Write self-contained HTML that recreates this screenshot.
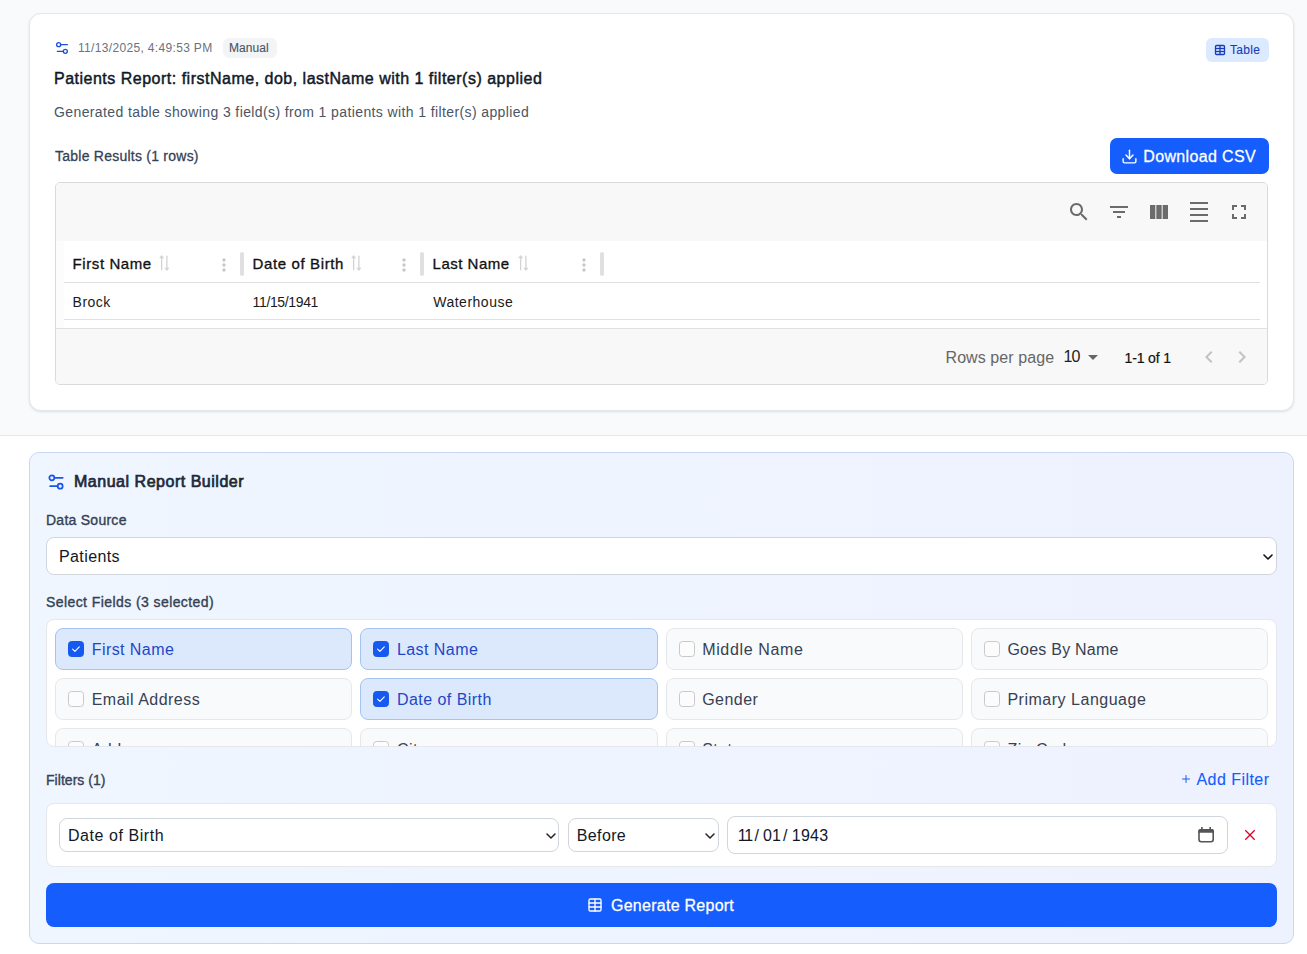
<!DOCTYPE html>
<html><head><meta charset="utf-8">
<style>
*{box-sizing:border-box;margin:0;padding:0}
html,body{width:1307px;height:954px;overflow:hidden;background:#fff;font-family:"Liberation Sans",sans-serif}
.a{position:absolute;white-space:nowrap;line-height:1}
#top{position:absolute;left:0;top:0;width:1307px;height:436px;background:#f9fafb;border-bottom:1px solid #e5e7eb}
#card{position:absolute;left:29px;top:13px;width:1265px;height:398px;background:#fff;border:1px solid #e5e7eb;border-radius:12px;box-shadow:0 1px 3px rgba(0,0,0,.08),0 1px 2px rgba(0,0,0,.04)}
.badge{position:absolute;border-radius:6px}
.btn{position:absolute;background:#155dfc;border-radius:7px}
#tbox{position:absolute;left:55px;top:182px;width:1213px;height:203px;background:#f8f8f8;border:1px solid #dadada;border-radius:5px;overflow:hidden}
.ico{position:absolute}
#builder{position:absolute;left:29px;top:452px;width:1265px;height:492px;background:linear-gradient(to right,#eff6ff,#eef2ff);border:1px solid #c8d8f2;border-radius:10px}
.sel{position:absolute;background:#fff;border:1px solid #d1d5dc;border-radius:8px}
.fld{position:absolute;height:42px;border:1px solid #e5e7eb;background:#f9fafb;border-radius:8px}
.fld.on{background:#dce9fc;border-color:#a3c4ef}
.cb{position:absolute;left:12px;top:12px;width:16px;height:16px;border:1.6px solid #c9c9c9;border-radius:3.5px;background:#fcfcfc}
.cb.on{background:#1659f0;border-color:#1659f0}
.fl{position:absolute;left:35.7px;font-size:16px;line-height:1;color:#364153}
.fld.on .fl{color:#1e47c8}
.sb{-webkit-text-stroke:0.45px currentColor}
.md{-webkit-text-stroke:0.28px currentColor}
</style></head><body>
<div id="top"></div>
<div id="card"></div>
<!-- header row -->
<svg class="ico" style="left:54px;top:40px" width="16" height="16" viewBox="0 0 24 24" fill="none" stroke="#1d4ed8" stroke-width="2" stroke-linecap="round"><path d="M20 7h-9"/><path d="M14 17H5"/><circle cx="17" cy="17" r="3"/><circle cx="7" cy="7" r="3"/></svg>
<div class="a" id="t_ts" style="letter-spacing:0.33px;left:78px;top:42.2px;font-size:12px;color:#6a7282">11/13/2025, 4:49:53 PM</div>
<div class="badge" style="left:223px;top:38px;width:54px;height:20px;background:#f3f4f6"></div>
<div class="a md" id="t_manual" style="-webkit-text-stroke:0.12px currentColor;letter-spacing:0.08px;left:229px;top:42.2px;font-size:12px;color:#4a5565">Manual</div>
<div class="badge" style="left:1206px;top:38px;width:63px;height:24px;background:#dbeafe"></div>
<svg class="ico" style="left:1214px;top:44px" width="12" height="12" viewBox="0 0 24 24" fill="none" stroke="#193cb8" stroke-width="2.6"><path d="M12 3v18"/><rect width="18" height="18" x="3" y="3" rx="2"/><path d="M3 9h18"/><path d="M3 15h18"/></svg>
<div class="a md" id="t_tablebadge" style="-webkit-text-stroke:0.12px currentColor;letter-spacing:0.32px;left:1230px;top:43.5px;font-size:12px;color:#193cb8">Table</div>
<div class="a sb" id="t_title" style="letter-spacing:0.5px;left:54px;top:70.7px;font-size:16px;color:#101828">Patients Report: firstName, dob, lastName with 1 filter(s) applied</div>
<div class="a" id="t_sub" style="letter-spacing:0.39px;left:54px;top:105px;font-size:14px;color:#4a5565">Generated table showing 3 field(s) from 1 patients with 1 filter(s) applied</div>
<div class="a md" id="t_results" style="letter-spacing:0.24px;left:55px;top:149px;font-size:14px;color:#364153">Table Results (1 rows)</div>
<div class="btn" style="left:1110px;top:138px;width:159px;height:36px"></div>
<svg class="ico" style="left:1121px;top:148px" width="17" height="17" viewBox="0 0 24 24" fill="none" stroke="#fff" stroke-width="2" stroke-linecap="round" stroke-linejoin="round"><path d="M12 15V3"/><path d="M21 15v4a2 2 0 0 1-2 2H5a2 2 0 0 1-2-2v-4"/><path d="m7 10 5 5 5-5"/></svg>
<div class="a md" id="t_dl" style="letter-spacing:0.35px;left:1143.3px;top:148.5px;font-size:16px;color:#fff">Download CSV</div>

<div id="tbox">
<div style="position:absolute;left:0;top:0;width:1211px;height:58px;background:#f8f8f8"></div>
<div style="position:absolute;left:0;top:58px;width:1211px;height:87px;background:#fcfcfc"></div>
<div style="position:absolute;left:8px;top:58px;width:1203px;height:87px;background:#fff"></div>
<div style="position:absolute;left:8px;top:99px;width:1196px;height:1px;background:#e0e0e0"></div>
<div style="position:absolute;left:8px;top:136px;width:1196px;height:1px;background:#e0e0e0"></div>
<div style="position:absolute;left:0;top:145px;width:1211px;height:1px;background:#e0e0e0"></div>
<div style="position:absolute;left:0;top:146px;width:1211px;height:56px;background:#f8f8f8"></div>
</div>
<svg class="ico" style="left:1067px;top:200px" width="24" height="24" viewBox="0 0 24 24" fill="#6b6b6b"><path d="M15.5 14h-.79l-.28-.27C15.41 12.59 16 11.11 16 9.5 16 5.910 13.09 3 9.5 3S3 5.91 3 9.5 5.91 16 9.5 16c1.610 0 3.09-.59 4.23-1.57l.27.28v.79l5 4.99L20.49 19zm-6 0C7.010 14 5 11.99 5 9.5S7.010 5 9.5 5 14 7.010 14 9.5 11.99 14 9.5 14"/></svg>
<svg class="ico" style="left:1107px;top:200px" width="24" height="24" viewBox="0 0 24 24" fill="#6b6b6b"><path d="M10 18h4v-2h-4zM3 6v2h18V6zm3 7h12v-2H6z"/></svg>
<svg class="ico" style="left:1147px;top:200px" width="24" height="24" viewBox="0 0 24 24" fill="#6b6b6b"><path d="M14.67 5v14H9.33V5zm1 14H21V5h-5.33zm-7.34 0V5H3v14z"/></svg>
<svg class="ico" style="left:1187px;top:200px" width="24" height="24" viewBox="0 0 24 24" fill="#6b6b6b"><path d="M3 2h18v2H3zm0 18h18v2H3zm0-6h18v2H3zm0-6h18v2H3z"/></svg>
<svg class="ico" style="left:1227px;top:200px" width="24" height="24" viewBox="0 0 24 24" fill="#6b6b6b"><path d="M7 14H5v5h5v-2H7zm-2-4h2V7h3V5H5zm12 7h-3v2h5v-5h-2zM14 5v2h3v3h2V5z"/></svg>
<div class="a sb" id="t_h1" style="-webkit-text-stroke:0.32px currentColor;letter-spacing:0.58px;left:72.6px;top:256.3px;font-size:15px;color:#111">First Name</div>
<div class="a" id="t_c1" style="letter-spacing:0.45px;left:72.6px;top:295.3px;font-size:14px;color:#1a1a1a">Brock</div>
<svg class="ico" id="s_h1" style="left:159.3px;top:255px" width="10.5" height="16" viewBox="4 2 16 20" preserveAspectRatio="none" fill="#d4d4d4"><g transform="rotate(90 12 12)"><path d="m18 12 4-4-4-4v3H3v2h15zM6 12l-4 4 4 4v-3h15v-2H6z"/></g></svg>
<svg class="ico" style="left:214px;top:255px" width="20" height="20" viewBox="0 0 24 24" fill="#c8c8c8"><path d="M12 8c1.1 0 2-.9 2-2s-.9-2-2-2-2 .9-2 2 .9 2 2 2m0 2c-1.1 0-2 .9-2 2s.9 2 2 2 2-.9 2-2-.9-2-2-2m0 6c-1.1 0-2 .9-2 2s.9 2 2 2 2-.9 2-2-.9-2-2-2"/></svg>
<div style="position:absolute;left:240px;top:252px;width:4px;height:24px;border-radius:2px;background:#e0e0e0"></div>
<div class="a sb" id="t_h2" style="-webkit-text-stroke:0.32px currentColor;letter-spacing:0.62px;left:252.6px;top:256.3px;font-size:15px;color:#111">Date of Birth</div>
<div class="a" id="t_c2" style="letter-spacing:-0.36px;left:252.6px;top:295.3px;font-size:14px;color:#1a1a1a">11/15/1941</div>
<svg class="ico" id="s_h2" style="left:351.4px;top:255px" width="10.5" height="16" viewBox="4 2 16 20" preserveAspectRatio="none" fill="#d4d4d4"><g transform="rotate(90 12 12)"><path d="m18 12 4-4-4-4v3H3v2h15zM6 12l-4 4 4 4v-3h15v-2H6z"/></g></svg>
<svg class="ico" style="left:394px;top:255px" width="20" height="20" viewBox="0 0 24 24" fill="#c8c8c8"><path d="M12 8c1.1 0 2-.9 2-2s-.9-2-2-2-2 .9-2 2 .9 2 2 2m0 2c-1.1 0-2 .9-2 2s.9 2 2 2 2-.9 2-2-.9-2-2-2m0 6c-1.1 0-2 .9-2 2s.9 2 2 2 2-.9 2-2-.9-2-2-2"/></svg>
<div style="position:absolute;left:420px;top:252px;width:4px;height:24px;border-radius:2px;background:#e0e0e0"></div>
<div class="a sb" id="t_h3" style="-webkit-text-stroke:0.32px currentColor;letter-spacing:0.5px;left:432.6px;top:256.3px;font-size:15px;color:#111">Last Name</div>
<div class="a" id="t_c3" style="letter-spacing:0.51px;left:433.2px;top:295.3px;font-size:14px;color:#1a1a1a">Waterhouse</div>
<svg class="ico" id="s_h3" style="left:517.7px;top:255px" width="10.5" height="16" viewBox="4 2 16 20" preserveAspectRatio="none" fill="#d4d4d4"><g transform="rotate(90 12 12)"><path d="m18 12 4-4-4-4v3H3v2h15zM6 12l-4 4 4 4v-3h15v-2H6z"/></g></svg>
<svg class="ico" style="left:574px;top:255px" width="20" height="20" viewBox="0 0 24 24" fill="#c8c8c8"><path d="M12 8c1.1 0 2-.9 2-2s-.9-2-2-2-2 .9-2 2 .9 2 2 2m0 2c-1.1 0-2 .9-2 2s.9 2 2 2 2-.9 2-2-.9-2-2-2m0 6c-1.1 0-2 .9-2 2s.9 2 2 2 2-.9 2-2-.9-2-2-2"/></svg>
<div style="position:absolute;left:600px;top:252px;width:4px;height:24px;border-radius:2px;background:#e0e0e0"></div>
<div class="a" id="t_rpp" style="letter-spacing:0.08px;left:945.5px;top:350.0px;font-size:16px;color:#666">Rows per page</div>
<div class="a" id="t_ten" style="letter-spacing:-1.0px;left:1063.5px;top:348.9px;font-size:16px;color:#222">10</div>
<svg class="ico" style="left:1081px;top:345px" width="24" height="24" viewBox="0 0 24 24" fill="#666"><path d="M7 10l5 5 5-5z"/></svg>
<div class="a" id="t_of" style="-webkit-text-stroke:0.2px currentColor;letter-spacing:-0.14px;left:1124.5px;top:350.5px;font-size:14px;color:#111">1-1 of 1</div>
<svg class="ico" style="left:1196.5px;top:345px" width="24" height="24" viewBox="0 0 24 24" fill="#c2c2c2"><path d="M15.41 7.41 14 6l-6 6 6 6 1.41-1.41L10.83 12z"/></svg>
<svg class="ico" style="left:1230px;top:345px" width="24" height="24" viewBox="0 0 24 24" fill="#c2c2c2"><path d="M10 6 8.59 7.41 13.17 12l-4.58 4.590L10 18l6-6z"/></svg>

<div id="builder"></div>
<svg class="ico" style="left:46px;top:471.5px" width="20" height="20" viewBox="0 0 24 24" fill="none" stroke="#1d55e6" stroke-width="2.1" stroke-linecap="round"><path d="M20 7h-9"/><path d="M14 17H5"/><circle cx="17" cy="17" r="3"/><circle cx="7" cy="7" r="3"/></svg>
<div class="a sb" id="t_mrb" style="-webkit-text-stroke:0.7px currentColor;letter-spacing:0.52px;left:74px;top:473.9px;font-size:16px;color:#1e2939">Manual Report Builder</div>
<div class="a md" id="t_ds" style="-webkit-text-stroke:0.36px currentColor;letter-spacing:0.26px;left:46px;top:513px;font-size:14px;color:#364153">Data Source</div>
<div class="sel" style="left:46px;top:537px;width:1231px;height:38px"></div>
<div class="a" id="t_pat" style="letter-spacing:0.39px;left:59px;top:548.6px;font-size:16px;color:#101828">Patients</div>
<div class="a md" id="t_sf" style="-webkit-text-stroke:0.36px currentColor;letter-spacing:0.42px;left:46px;top:594.7px;font-size:14px;color:#364153">Select Fields (3 selected)</div>
<div id="grid" style="position:absolute;left:46px;top:619px;width:1231px;height:128px;background:#fff;border:1px solid #e5e7eb;border-radius:8px;overflow:hidden">
<div class="fld on" style="left:8.00px;top:8px;width:297.25px"><div class="cb on"><svg width="16" height="16" viewBox="0 0 16 16" style="position:absolute;left:-1.5px;top:-1.5px"><path d="M4.6 8.1l2.3 2.3 4.4-4.6" fill="none" stroke="#fff" stroke-width="1.1" stroke-linecap="round" stroke-linejoin="round"/></svg></div><div class="fl" id="f_0" style="letter-spacing:0.44px;top:12.5px">First Name</div></div>
<div class="fld on" style="left:313.25px;top:8px;width:297.25px"><div class="cb on"><svg width="16" height="16" viewBox="0 0 16 16" style="position:absolute;left:-1.5px;top:-1.5px"><path d="M4.6 8.1l2.3 2.3 4.4-4.6" fill="none" stroke="#fff" stroke-width="1.1" stroke-linecap="round" stroke-linejoin="round"/></svg></div><div class="fl" id="f_1" style="letter-spacing:0.44px;top:12.5px">Last Name</div></div>
<div class="fld" style="left:618.50px;top:8px;width:297.25px"><div class="cb"></div><div class="fl" id="f_2" style="letter-spacing:0.65px;top:12.5px">Middle Name</div></div>
<div class="fld" style="left:923.75px;top:8px;width:297.25px"><div class="cb"></div><div class="fl" id="f_3" style="letter-spacing:0.23px;top:12.5px">Goes By Name</div></div>
<div class="fld" style="left:8.00px;top:58px;width:297.25px"><div class="cb"></div><div class="fl" id="f_4" style="letter-spacing:0.48px;top:12.5px">Email Address</div></div>
<div class="fld on" style="left:313.25px;top:58px;width:297.25px"><div class="cb on"><svg width="16" height="16" viewBox="0 0 16 16" style="position:absolute;left:-1.5px;top:-1.5px"><path d="M4.6 8.1l2.3 2.3 4.4-4.6" fill="none" stroke="#fff" stroke-width="1.1" stroke-linecap="round" stroke-linejoin="round"/></svg></div><div class="fl" id="f_5" style="letter-spacing:0.46px;top:12.5px">Date of Birth</div></div>
<div class="fld" style="left:618.50px;top:58px;width:297.25px"><div class="cb"></div><div class="fl" id="f_6" style="letter-spacing:0.46px;top:12.5px">Gender</div></div>
<div class="fld" style="left:923.75px;top:58px;width:297.25px"><div class="cb"></div><div class="fl" id="f_7" style="letter-spacing:0.51px;top:12.5px">Primary Language</div></div>
<div class="fld" style="left:8.00px;top:108px;width:297.25px"><div class="cb"></div><div class="fl" id="f_8" style="letter-spacing:0.45px;top:12.5px">Address</div></div>
<div class="fld" style="left:313.25px;top:108px;width:297.25px"><div class="cb"></div><div class="fl" id="f_9" style="letter-spacing:0.45px;top:12.5px">City</div></div>
<div class="fld" style="left:618.50px;top:108px;width:297.25px"><div class="cb"></div><div class="fl" id="f_10" style="letter-spacing:0.45px;top:12.5px">State</div></div>
<div class="fld" style="left:923.75px;top:108px;width:297.25px"><div class="cb"></div><div class="fl" id="f_11" style="letter-spacing:0.45px;top:12.5px">Zip Code</div></div>
</div>
<svg class="ico" style="left:1262.5px;top:553.5px" width="10" height="6" viewBox="0 0 10 6"><path d="M1 1l4 4 4-4" fill="none" stroke="#111" stroke-width="1.6" stroke-linecap="round" stroke-linejoin="round"/></svg>
<div style="position:absolute;left:46px;top:803px;width:1231px;height:64px;background:#fff;border:1px solid #e5e7eb;border-radius:8px"></div>
<div class="sel" style="left:59px;top:818px;width:500px;height:34px"></div>
<div class="a" id="t_fdob" style="letter-spacing:0.55px;left:68px;top:827.5px;font-size:16px;color:#101828">Date of Birth</div>
<svg class="ico" style="left:545.5px;top:832.5px" width="10" height="6" viewBox="0 0 10 6"><path d="M1 1l4 4 4-4" fill="none" stroke="#222" stroke-width="1.5" stroke-linecap="round" stroke-linejoin="round"/></svg>
<div class="sel" style="left:568px;top:818px;width:151px;height:34px"></div>
<div class="a" id="t_before" style="letter-spacing:0.36px;left:576.8px;top:827.5px;font-size:16px;color:#101828">Before</div>
<svg class="ico" style="left:704.5px;top:832.5px" width="10" height="6" viewBox="0 0 10 6"><path d="M1 1l4 4 4-4" fill="none" stroke="#222" stroke-width="1.5" stroke-linecap="round" stroke-linejoin="round"/></svg>
<div class="sel" style="left:727px;top:816px;width:501px;height:38px"></div>
<div class="a" id="t_d0" style="left:737.8px;top:827.5px;font-size:16px;color:#101828;letter-spacing:-1.2px">11</div>
<div class="a" id="t_d1" style="left:754.4px;top:827.5px;font-size:16px;color:#101828;letter-spacing:0px">/</div>
<div class="a" id="t_d2" style="left:763.1px;top:827.5px;font-size:16px;color:#101828;letter-spacing:0px">01</div>
<div class="a" id="t_d3" style="left:783px;top:827.5px;font-size:16px;color:#101828;letter-spacing:0px">/</div>
<div class="a" id="t_d4" style="left:791.7px;top:827.5px;font-size:16px;color:#101828;letter-spacing:0.3px">1943</div>
<svg class="ico" style="left:1197px;top:826px" width="18" height="18" viewBox="0 0 18 18"><rect x="2" y="3.8" width="14.2" height="12" rx="2.2" fill="none" stroke="#555" stroke-width="1.6"/><path d="M1.2 6.8V5.2a2.2 2.2 0 0 1 2.2-2.2h11.4a2.2 2.2 0 0 1 2.2 2.2v1.6z" fill="#555"/><path d="M4.9 1.1v2.5M13.2 1.1v2.5" stroke="#555" stroke-width="1.6"/></svg>
<svg class="ico" style="left:1244px;top:829px" width="12" height="12" viewBox="0 0 12 12"><path d="M1.3 1.3l9.4 9.4M10.7 1.3l-9.4 9.4" stroke="#d6002a" stroke-width="1.3" stroke-linecap="butt"/></svg>
<div class="a md" id="t_fil" style="-webkit-text-stroke:0.36px currentColor;letter-spacing:0.04px;left:46px;top:773px;font-size:14px;color:#364153">Filters (1)</div>
<svg class="ico" style="left:1180px;top:773px" width="12" height="12" viewBox="0 0 24 24" fill="none" stroke="#155dfc" stroke-width="2" stroke-linecap="round"><path d="M5 12h14"/><path d="M12 5v14"/></svg>
<div class="a md" id="t_add" style="-webkit-text-stroke:0.1px currentColor;letter-spacing:0.45px;left:1196.5px;top:771.5px;font-size:16px;color:#155dfc">Add Filter</div>
<div class="btn" style="left:46px;top:883px;width:1231px;height:44px;border-radius:8px"></div>
<svg class="ico" style="left:587px;top:897px" width="16" height="16" viewBox="0 0 24 24" fill="none" stroke="#fff" stroke-width="2" stroke-linecap="round" stroke-linejoin="round"><path d="M12 3v18"/><rect width="18" height="18" x="3" y="3" rx="2"/><path d="M3 9h18"/><path d="M3 15h18"/></svg>
<div class="a md" id="t_gen" style="letter-spacing:0.26px;left:611.0px;top:898.0px;font-size:16px;color:#fff">Generate Report</div>
</body></html>
